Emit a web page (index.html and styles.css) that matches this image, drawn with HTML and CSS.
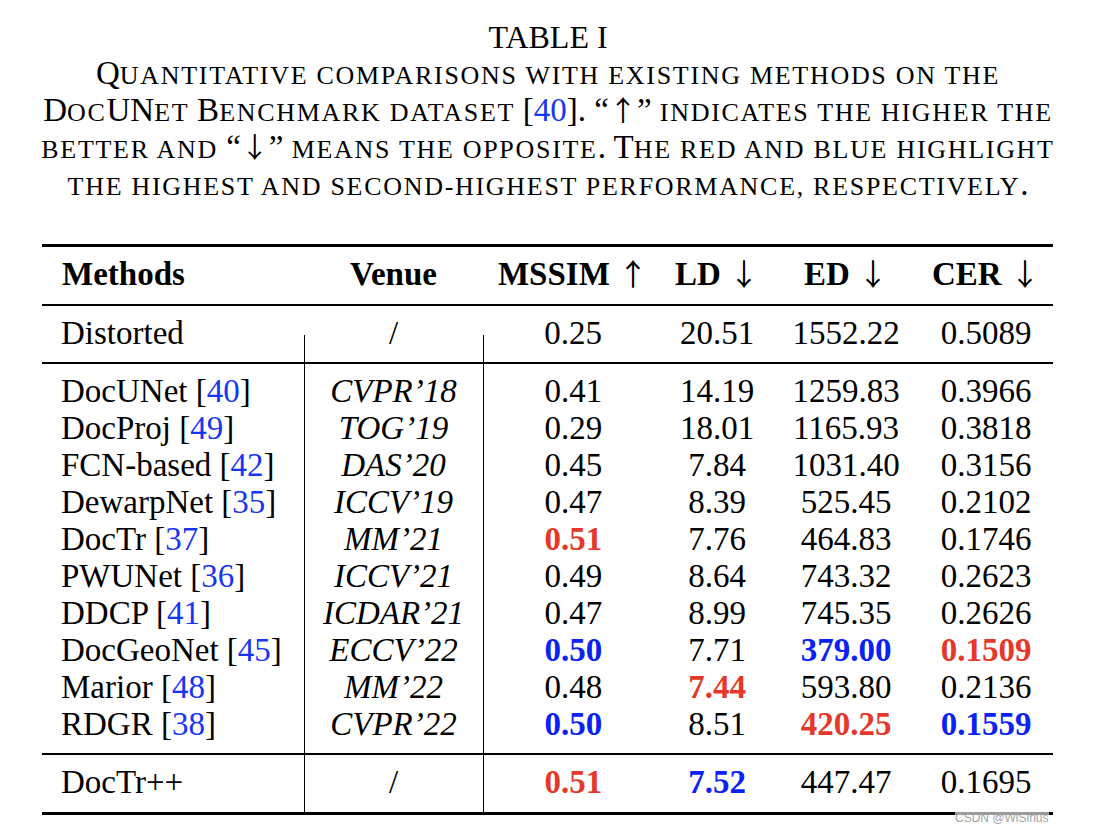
FILE: index.html
```html
<!DOCTYPE html>
<html lang="en">
<head>
<meta charset="utf-8">
<title>TABLE I</title>
<link rel="stylesheet" href="styles.css">
</head>
<body>
<div class="page">
  <div class="caption">
    <div class="cap-title">TABLE I</div>
    <div class="cap-text">
      <span class="lg">Q</span>uantitative comparisons with existing methods on the<br>
      <span class="lg">D</span>oc<span class="lg">UN</span>et <span class="lg">B</span>enchmark dataset <span class="lg">[<span class="ref">40</span>]. “<span class="arr">↑</span>”</span> indicates the higher the<br>
      better and <span class="lg">“<span class="arr">↓</span>”</span> means the opposite<span class="lg">. T</span>he red and blue highlight<br>
      the highest and second-highest performance, respectively<span class="lg">.</span>
    </div>
  </div>

  <table class="results">
    <colgroup>
      <col class="c-method"><col class="c-venue"><col class="c-mssim"><col class="c-ld"><col class="c-ed"><col class="c-cer">
    </colgroup>
    <thead>
      <tr>
        <th class="h-method">Methods</th>
        <th>Venue</th>
        <th>MSSIM <span class="arr">↑</span></th>
        <th>LD <span class="arr">↓</span></th>
        <th>ED <span class="arr">↓</span></th>
        <th class="last">CER <span class="arr">↓</span></th>
      </tr>
    </thead>
    <tbody class="g-base">
      <tr>
        <td class="method">Distorted</td>
        <td class="venue upright vpart">/</td>
        <td class="vpart">0.25</td>
        <td>20.51</td>
        <td>1552.22</td>
        <td class="last">0.5089</td>
      </tr>
    </tbody>
    <tbody class="g-main">
      <tr>
        <td class="method">DocUNet [<span class="ref">40</span>]</td>
        <td class="venue v">CVPR’18</td>
        <td class="v">0.41</td><td>14.19</td><td>1259.83</td><td class="last">0.3966</td>
      </tr>
      <tr>
        <td class="method">DocProj [<span class="ref">49</span>]</td>
        <td class="venue v">TOG’19</td>
        <td class="v">0.29</td><td>18.01</td><td>1165.93</td><td class="last">0.3818</td>
      </tr>
      <tr>
        <td class="method">FCN-based [<span class="ref">42</span>]</td>
        <td class="venue v">DAS’20</td>
        <td class="v">0.45</td><td>7.84</td><td>1031.40</td><td class="last">0.3156</td>
      </tr>
      <tr>
        <td class="method">DewarpNet [<span class="ref">35</span>]</td>
        <td class="venue v">ICCV’19</td>
        <td class="v">0.47</td><td>8.39</td><td>525.45</td><td class="last">0.2102</td>
      </tr>
      <tr>
        <td class="method">DocTr [<span class="ref">37</span>]</td>
        <td class="venue v">MM’21</td>
        <td class="v best">0.51</td><td>7.76</td><td>464.83</td><td class="last">0.1746</td>
      </tr>
      <tr>
        <td class="method">PWUNet [<span class="ref">36</span>]</td>
        <td class="venue v">ICCV’21</td>
        <td class="v">0.49</td><td>8.64</td><td>743.32</td><td class="last">0.2623</td>
      </tr>
      <tr>
        <td class="method">DDCP [<span class="ref">41</span>]</td>
        <td class="venue v">ICDAR’21</td>
        <td class="v">0.47</td><td>8.99</td><td>745.35</td><td class="last">0.2626</td>
      </tr>
      <tr>
        <td class="method">DocGeoNet [<span class="ref">45</span>]</td>
        <td class="venue v">ECCV’22</td>
        <td class="v second">0.50</td><td>7.71</td><td class="second">379.00</td><td class="last best">0.1509</td>
      </tr>
      <tr>
        <td class="method">Marior [<span class="ref">48</span>]</td>
        <td class="venue v">MM’22</td>
        <td class="v">0.48</td><td class="best">7.44</td><td>593.80</td><td class="last">0.2136</td>
      </tr>
      <tr>
        <td class="method">RDGR [<span class="ref">38</span>]</td>
        <td class="venue v">CVPR’22</td>
        <td class="v second">0.50</td><td>8.51</td><td class="best">420.25</td><td class="last second">0.1559</td>
      </tr>
    </tbody>
    <tbody class="g-ours">
      <tr>
        <td class="method">DocTr++</td>
        <td class="venue upright v">/</td>
        <td class="v best">0.51</td><td class="second">7.52</td><td>447.47</td><td class="last">0.1695</td>
      </tr>
    </tbody>
  </table>
  <div class="watermark">CSDN @WiSirius</div>
</div>
</body>
</html>
```

FILE: styles.css
```css
html, body {
  margin: 0;
  padding: 0;
  background: #ffffff;
}

.page {
  position: relative;
  width: 1096px;
  height: 834px;
  font-family: "Liberation Serif", "Times New Roman", serif;
  color: #000;
  font-size: 33px;
}

.caption {
  padding-top: 19px;
  text-align: center;
}

.cap-title {
  font-size: 32px;
  line-height: 37px;
}

.cap-text {
  margin-top: 1px;
  font-size: 26px;
  line-height: 37px;
  text-transform: uppercase;
  letter-spacing: 1.7px;
}

.cap-text .lg {
  font-size: 33px;
  letter-spacing: 0;
  line-height: 0;
}

.ref {
  color: #1736f2;
}

.arr {
  font-family: "Noto Sans CJK JP", "DejaVu Sans", sans-serif;
  font-weight: normal;
  font-size: 30px;
  line-height: 1;
}

.cap-text .arr {
  font-size: 28px;
  line-height: 0;
}

.results {
  margin-top: 39px;
  margin-left: 42px;
  width: 1011px;
  table-layout: fixed;
  border-collapse: collapse;
  border-top: 3px solid #000;
  border-bottom: 3px solid #000;
  line-height: 37px;
}

.c-method { width: 262px; }
.c-venue { width: 179px; }
.c-mssim { width: 180px; }
.c-ld { width: 108px; }
.c-ed { width: 150px; }
.c-cer { width: 132px; }

.results th,
.results td {
  padding: 0;
  text-align: center;
  white-space: nowrap;
  vertical-align: top;
}

.results thead {
  border-bottom: 2px solid #000;
}

.results th {
  font-weight: bold;
  padding-top: 9px;
  padding-bottom: 11px;
}

.results th.h-method {
  text-align: left;
  padding-left: 20px;
}

.results td.method {
  text-align: left;
  padding-left: 19px;
}

.results .last {
  padding-right: 2px;
}

.results td.venue {
  font-style: italic;
}

.results td.upright {
  font-style: normal;
}

.g-base {
  border-bottom: 2px solid #000;
}

.g-base td {
  padding-top: 9px;
  padding-bottom: 10px;
}

.g-base td.vpart {
  background: linear-gradient(#000, #000) left bottom / 1px 27px no-repeat;
}

.g-main {
  border-bottom: 2px solid #000;
}

.g-main tr:first-child td {
  padding-top: 9px;
}

.g-main tr:last-child td {
  padding-bottom: 10px;
}

.g-ours td {
  padding-top: 9px;
  padding-bottom: 11px;
}

.results td.v {
  border-left: 1px solid #000;
}

.best {
  color: #e5382a;
  font-weight: bold;
}

.second {
  color: #0a22f2;
  font-weight: bold;
}

.watermark {
  position: absolute;
  left: 955px;
  top: 811px;
  font-family: "Liberation Sans", Arial, sans-serif;
  font-size: 12px;
  line-height: 14px;
  color: #a3a3a3;
  background: rgba(255, 255, 255, 0.6);
}
```
